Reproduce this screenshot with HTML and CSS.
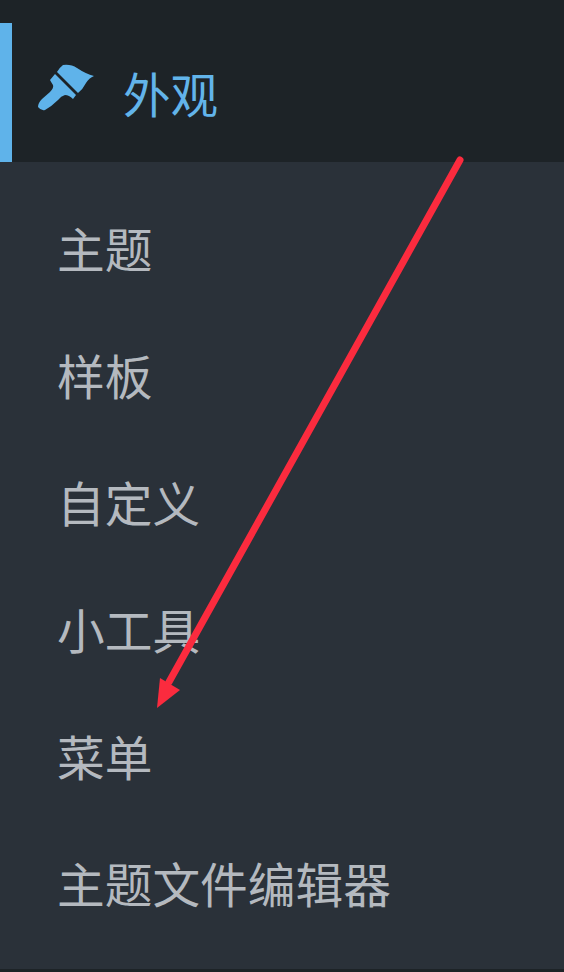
FILE: index.html
```html
<!DOCTYPE html>
<html lang="zh-CN">
<head>
<meta charset="utf-8">
<title>外观</title>
<link rel="stylesheet" href="styles.css">
</head>
<body>
<div class="page">
  <div class="top">
    <div class="current">
      <svg class="brush" viewBox="0 0 564 972" aria-hidden="true">
        <path d="M63 65Q71 64 77 68Q86 74 94 76Q89 78 86 83Q83 89 78 93L57 72Q59 68 63 65Z"/>
        <path d="M55 74L76 95L73 99Q69 95 65 95Q61 96 58 100Q52 106 45 110Q41 111 38 107Q38 103 42 99L50 92Q54 88 53 85Q51 82 50 80Z"/>
      </svg>
      <span class="current-label">外观</span>
    </div>
  </div>
  <ul class="submenu">
    <li>主题</li>
    <li>样板</li>
    <li>自定义</li>
    <li>小工具</li>
    <li>菜单</li>
    <li>主题文件编辑器</li>
  </ul>
  <div class="bottom"></div>
  <svg class="arrow" viewBox="0 0 564 972" aria-hidden="true">
    <line x1="460" y1="160" x2="169" y2="682"/>
    <path d="M157 708L160 678L180 690Z"/>
  </svg>
</div>
</body>
</html>
```

FILE: styles.css
```css
html, body {
  margin: 0;
  padding: 0;
}
.page {
  position: relative;
  width: 564px;
  height: 972px;
  overflow: hidden;
  display: flex;
  flex-direction: column;
  background: #2a3139;
  font-family: "Noto Sans CJK SC", "Noto Sans", sans-serif;
}
.top {
  background: #1d2327;
  padding-top: 23px;
}
.current {
  position: relative;
  box-sizing: border-box;
  height: 139px;
  border-left: 12px solid #5fb3ea;
  padding-left: 111px;
  display: flex;
  align-items: center;
}
.brush {
  position: absolute;
  left: -12px;
  top: -23px;
  width: 564px;
  height: 972px;
  fill: #5fb3ea;
}
.current-label {
  color: #62b4ea;
  font-size: 47.5px;
  line-height: 68px;
  font-weight: 400;
}
.submenu {
  list-style: none;
  margin: 0;
  padding: 22px 0 0 57px;
  flex: 1;
  color: #b4b9bf;
  font-size: 47.7px;
  font-weight: 400;
}
.submenu li {
  height: 127px;
  line-height: 127px;
}
.bottom {
  height: 3px;
  background: #1d2327;
}
.arrow {
  position: absolute;
  left: 0;
  top: 0;
  width: 564px;
  height: 972px;
}
.arrow line {
  stroke: #fb2b3e;
  stroke-width: 7;
  stroke-linecap: round;
}
.arrow path {
  fill: #fb2b3e;
}
```
